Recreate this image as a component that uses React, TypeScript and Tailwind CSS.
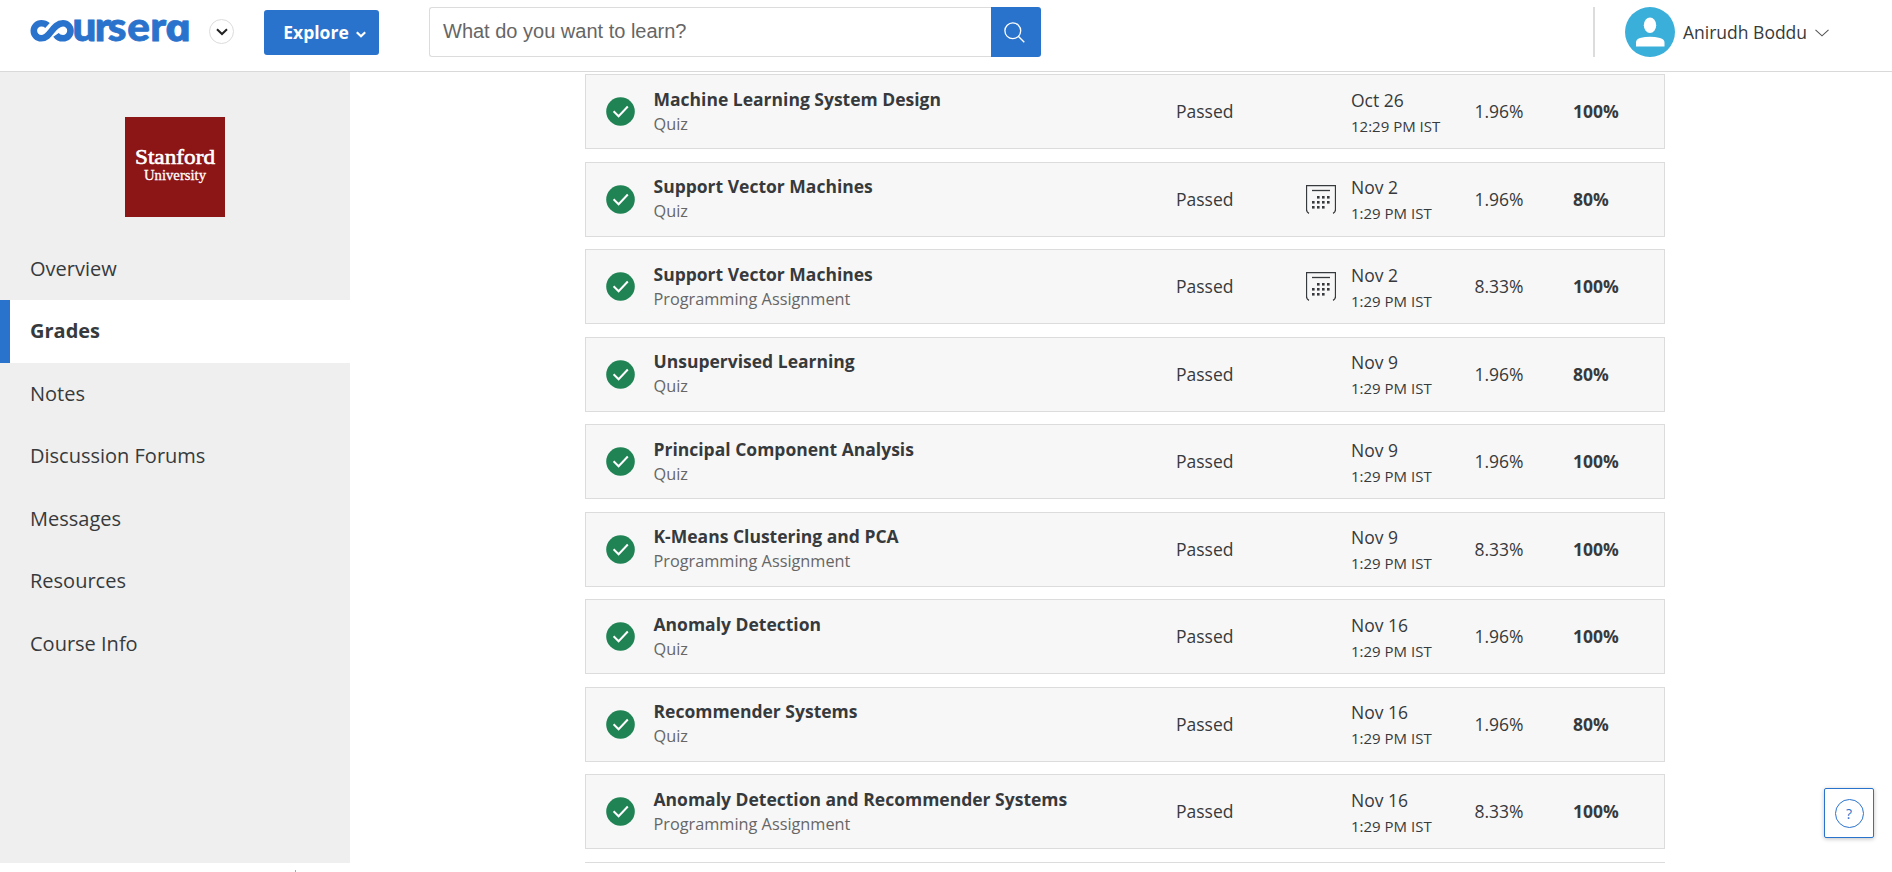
import React from "react";

type Row = { title: string; kind: string; cal?: boolean; date: string; time: string; weight: string; grade: string };

const rows: Row[] = [
  { title: "Machine Learning System Design", kind: "Quiz", date: "Oct 26", time: "12:29 PM IST", weight: "1.96%", grade: "100%" },
  { title: "Support Vector Machines", kind: "Quiz", cal: true, date: "Nov 2", time: "1:29 PM IST", weight: "1.96%", grade: "80%" },
  { title: "Support Vector Machines", kind: "Programming Assignment", cal: true, date: "Nov 2", time: "1:29 PM IST", weight: "8.33%", grade: "100%" },
  { title: "Unsupervised Learning", kind: "Quiz", date: "Nov 9", time: "1:29 PM IST", weight: "1.96%", grade: "80%" },
  { title: "Principal Component Analysis", kind: "Quiz", date: "Nov 9", time: "1:29 PM IST", weight: "1.96%", grade: "100%" },
  { title: "K-Means Clustering and PCA", kind: "Programming Assignment", date: "Nov 9", time: "1:29 PM IST", weight: "8.33%", grade: "100%" },
  { title: "Anomaly Detection", kind: "Quiz", date: "Nov 16", time: "1:29 PM IST", weight: "1.96%", grade: "100%" },
  { title: "Recommender Systems", kind: "Quiz", date: "Nov 16", time: "1:29 PM IST", weight: "1.96%", grade: "80%" },
  { title: "Anomaly Detection and Recommender Systems", kind: "Programming Assignment", date: "Nov 16", time: "1:29 PM IST", weight: "8.33%", grade: "100%" },
];

const nav = ["Overview", "Grades", "Notes", "Discussion Forums", "Messages", "Resources", "Course Info"];

function Logo() {
  return (
    <svg width="172" height="60" viewBox="0 0 172 60" className="block shrink-0" aria-label="coursera">
      <path
        d="M19.500 25.500C17.800 23.900 15.800 23.300 13.300 23.300A7.500 7.500 0 0 0 13.300 38.300C22.500 38.300 24.500 23.300 35 23.300A7.500 7.500 0 1 1 35 38.300C31.500 38.300 29.500 37 28 34.800"
        fill="none"
        stroke="#2a73cc"
        strokeWidth="6.600"
      />
      <g fill="#2a73cc" stroke="#2a73cc" strokeWidth="0.800">
        <text transform="scale(1.07 1)" x="41.500 62.500 74.600 92.800 114.200" y="41.200" fontFamily="Lato" fontWeight="900" fontSize="39.500">urser</text>
        <text transform="translate(139.200 41.200) scale(1.22 1) skewX(12)" fontFamily="Open Sans" fontStyle="italic" fontWeight="700" fontSize="37">a</text>
      </g>
    </svg>
  );
}

function Check() {
  return (
    <svg width="29" height="29" viewBox="0 0 29 29" className="block">
      <circle cx="14.500" cy="14.500" r="14.300" fill="#1f8354" />
      <path d="M7.600 14.200l5 5L21.800 9.500" fill="none" stroke="#fff" strokeWidth="2" />
    </svg>
  );
}

function Calendar() {
  const dots = [
    [11, 11], [16, 11], [21, 11],
    [6, 16], [11, 16], [16, 16], [21, 16],
    [6, 21], [11, 21], [16, 21],
  ];
  return (
    <svg width="30" height="29" viewBox="0 0 30 29" className="block">
      <path d="M3 28.300Q.500 27.300.500 24.500V.500H29.500V24.500Q29.500 27.300 27 28.300" fill="none" stroke="#373a3c" strokeWidth="1.300" />
      <path d="M6 5.500H24" stroke="#373a3c" strokeWidth="1.300" />
      {dots.map(([x, y]) => (
        <rect key={`${x}-${y}`} x={x} y={y} width="2.600" height="2.600" fill="#373a3c" />
      ))}
    </svg>
  );
}

export default function App() {
  return (
    <div className="flex h-[872px] w-[1892px] flex-col overflow-hidden bg-white font-['Open_Sans',sans-serif] text-[#373a3c]">
      <header className="flex h-[72px] shrink-0 items-start border-b border-[#d9d9d9] pl-7">
        <Logo />
        <span className="mt-[19px] ml-[9px] flex size-[25px] shrink-0 items-center justify-center rounded-full border border-[#dcdcdc]">
          <svg width="12" height="8" viewBox="0 0 12 8"><path d="M1 1.200l5 4.800 5-4.800" fill="none" stroke="#222" strokeWidth="2" /></svg>
        </span>
        <button className="mt-[10px] ml-[30px] flex h-[45px] w-[115px] shrink-0 items-center rounded-[3px] bg-[#2a73cc] pl-[19px] text-[17.5px] font-bold text-white">
          <span className="w-[66px] whitespace-nowrap">Explore</span>
          <svg width="10" height="7" viewBox="0 0 10 7" className="mt-[3px] ml-[7px]"><path d="M.8 1.200l4.200 4 4.200-4" fill="none" stroke="#fff" strokeWidth="2.200" /></svg>
        </button>
        <div className="mt-[7px] ml-[50px] flex h-[50px] w-[612px] shrink-0">
          <div className="flex flex-1 items-center rounded-l-[3px] border border-r-0 border-[#dcdcdc] pb-[2px] pl-[13px] font-['Liberation_Sans',sans-serif] text-[20px] text-[#666]">What do you want to learn?</div>
          <div className="flex w-[50px] items-center justify-center rounded-r-[3px] bg-[#2a73cc] pr-[4px]">
            <svg width="21" height="21" viewBox="0 0 21 21"><g fill="none" stroke="#fff" strokeWidth="1.300"><circle cx="8.800" cy="8.800" r="7.900" /><path d="M14.300 14.300l6 6" /></g></svg>
          </div>
        </div>
        <div className="mt-[7px] ml-[552px] h-[50px] w-[2px] shrink-0 bg-[#dcdcdc]" />
        <svg width="50" height="50" viewBox="0 0 50 50" className="mt-[7px] ml-[30px] shrink-0">
          <circle cx="25" cy="25" r="25" fill="#3aafda" />
          <ellipse cx="25" cy="18.200" rx="6.200" ry="7.700" fill="#fff" />
          <path d="M11 39.500V35.500Q11 32 15 31Q25 28.500 35 31Q39.500 32 39.500 35.500V39.500Z" fill="#fff" />
        </svg>
        <span className="mt-[19px] ml-[8px] w-[124px] text-[17.5px] leading-[26px] whitespace-nowrap">Anirudh Boddu</span>
        <svg width="14" height="8" viewBox="0 0 14 8" className="mt-[29px] ml-[8px]"><path d="M.500.800L7 6.800 13.500.800" fill="none" stroke="#555" strokeWidth="1.100" /></svg>
      </header>

      <div className="flex h-[791px] shrink-0 overflow-hidden">
        <aside className="flex w-[350px] shrink-0 flex-col bg-[#efefef]">
          <div className="mx-auto mt-[45px] flex size-[100px] shrink-0 flex-col items-center bg-[#8c1515] pt-[26px]">
            <svg width="82" height="42" viewBox="0 0 82 42" className="block" fill="#fff">
              <text x="1" y="21" fontSize="22" fontFamily="Liberation Serif" stroke="#fff" strokeWidth="0.600" textLength="80" lengthAdjust="spacingAndGlyphs">Stanford</text>
              <text x="10" y="36.500" fontSize="15.500" fontFamily="Liberation Serif" stroke="#fff" strokeWidth="0.300" textLength="62" lengthAdjust="spacingAndGlyphs">University</text>
            </svg>
          </div>
          <nav className="mt-[20.5px] flex flex-col text-[20px]">
            {nav.map((n) => (
              <a
                key={n}
                className={
                  n === "Grades"
                    ? "flex h-[62.5px] items-center border-l-[10px] border-[#2a73cc] bg-white pl-5 font-bold"
                    : "flex h-[62.5px] items-center pl-[30px]"
                }
              >
                {n}
              </a>
            ))}
          </nav>
        </aside>
        <main className="ml-[235px] flex w-[1080px] flex-col gap-[12.5px] pt-[2.25px]">
          {rows.map((r, i) => (
            <div key={i} className="flex h-[75px] shrink-0 items-center border border-[#dcdcdc] bg-[#f7f7f7] pl-[20px]">
              <Check />
              <div className="ml-[18.5px] flex w-[522.5px] flex-col pb-[1px]">
                <span className="text-[17.5px] leading-[25px] font-bold">{r.title}</span>
                <span className="text-[16.3px] leading-[24px] text-[#666]">{r.kind}</span>
              </div>
              <span className="w-[130px] pb-[1px] text-[17.5px]">Passed</span>
              <div className="w-[45px]">{r.cal && <Calendar />}</div>
              <div className="flex w-[123.5px] flex-col pt-[2px]">
                <span className="text-[17.5px] leading-[26px]">{r.date}</span>
                <span className="text-[15px] leading-[26px]">{r.time}</span>
              </div>
              <span className="w-[98.5px] pb-[1px] text-[17.5px]">{r.weight}</span>
              <span className="pb-[1px] text-[17.5px] font-bold">{r.grade}</span>
            </div>
          ))}
          <div className="h-[75px] shrink-0 border border-[#dcdcdc] bg-[#f7f7f7]" />
        </main>
      </div>

      <div className="ml-[295px] mt-[7px] h-[2px] w-px bg-[#aaa]" />
      <div className="absolute top-[788px] left-[1824px] flex size-[50px] items-center justify-center rounded-[2px] border border-[#2a73cc] bg-white shadow-[0_1px_4px_rgba(0,0,0,0.250)]">
        <span className="flex size-[29px] items-center justify-center rounded-full border border-[#2a73cc] text-[14px] text-[#2a73cc]">?</span>
      </div>
    </div>
  );
}
